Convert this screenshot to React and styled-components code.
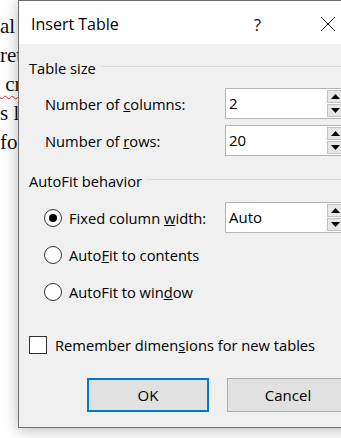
import styled, { createGlobalStyle } from "styled-components";

const GlobalStyle = createGlobalStyle`
  html, body {
    margin: 0;
    padding: 0;
    background: #ffffff;
    overflow: hidden;
  }
`;

const Screen = styled.div`
  display: flex;
  width: 341px;
  height: 438px;
  overflow: hidden;
  background: #ffffff;
`;

const DocStrip = styled.div`
  flex: none;
  width: 18px;
  padding-top: 12px;
  font-family: "Liberation Serif", "Times New Roman", serif;
  font-size: 21px;
  line-height: 29px;
  color: #111;
  white-space: pre;
  overflow: hidden;
`;

const DocLine = styled.div`
  text-decoration: ${(p) => (p.$misspelled ? "underline wavy #e02020" : "none")};
  text-decoration-thickness: 1px;
  text-underline-offset: 4px;
`;

const Dialog = styled.div`
  flex: none;
  width: 340px;
  height: 426px;
  display: flex;
  flex-direction: column;
  border: 1px solid #6f6f6f;
  border-right: none;
  background: #f0f0f0;
  box-shadow: 0 2px 14px rgba(0, 0, 0, 0.28);
  font-family: "Open Sans", "Noto Sans", sans-serif;
  font-size: 14.7px;
  color: #000;
  position: relative;
  z-index: 1;
`;

const TitleBar = styled.div`
  height: 43px;
  flex: none;
  display: flex;
  align-items: center;
  background: #ffffff;
  padding: 3px 0 0 12px;
  box-sizing: border-box;
`;

const Title = styled.div`
  flex: 1;
  font-size: 16px;
`;

const TitleButton = styled.div`
  width: ${(p) => p.$w}px;
  display: flex;
  justify-content: center;
  align-items: center;
  font-size: 17px;
  color: #111;
`;

const Body = styled.div`
  flex: 1;
  display: flex;
  flex-direction: column;
  padding: 14px 14px 0 10px;
`;

const GroupHeader = styled.div`
  display: flex;
  align-items: center;
  height: 20px;
  gap: 5px;
  margin-top: ${(p) => p.$top || 0}px;

  &::after {
    content: "";
    flex: 1;
    height: 1px;
    background: #dcdcdc;
    margin-top: -3px;
  }
`;

const Rows = styled.div`
  display: flex;
  flex-direction: column;
  gap: ${(p) => p.$gap}px;
  margin-top: ${(p) => p.$top}px;
  padding-left: ${(p) => p.$indent}px;
`;

const Row = styled.div`
  display: flex;
  align-items: center;
  height: 31px;
`;

const Label = styled.div`
  width: ${(p) => (p.$w ? `${p.$w}px` : "auto")};
  flex: none;
`;

const Field = styled.div`
  flex: 1;
  height: 31px;
  box-sizing: border-box;
  display: flex;
  border: 1px solid #b4b4b4;
  background: #ffffff;
`;

const FieldText = styled.div`
  flex: 1;
  padding: 4px 0 0 3px;
  font-size: 15px;
`;

const Spinner = styled.div`
  width: 17px;
  display: flex;
  flex-direction: column;
  gap: 1px;
  padding: 1px 0 1px 0;
`;

const SpinButton = styled.div`
  flex: 1;
  display: flex;
  align-items: center;
  justify-content: center;
  background: #e6e6e6;
  border: 1px solid #c2c2c2;
`;

const Radio = styled.div`
  width: 18px;
  height: 18px;
  box-sizing: border-box;
  border: 1px solid #333;
  border-radius: 50%;
  background: #fff;
  display: flex;
  align-items: center;
  justify-content: center;
  margin-right: 7px;
  flex: none;

  &::after {
    content: "";
    display: ${(p) => (p.$checked ? "block" : "none")};
    width: 8px;
    height: 8px;
    border-radius: 50%;
    background: #000;
  }
`;

const CheckRow = styled.div`
  display: flex;
  align-items: center;
  gap: 8px;
  margin-top: 28px;
`;

const Checkbox = styled.div`
  width: 18px;
  height: 18px;
  box-sizing: border-box;
  border: 1px solid #333;
  background: #fff;
`;

const ButtonRow = styled.div`
  display: flex;
  gap: 18px;
  margin-top: 23px;
  padding-left: 58px;
`;

const Button = styled.div`
  flex: none;
  width: 122px;
  height: 34px;
  box-sizing: border-box;
  display: flex;
  align-items: center;
  justify-content: center;
  background: #e1e1e1;
  border: ${(p) => (p.$primary ? "2px solid #0078d7" : "1px solid #adadad")};
  font-size: 15px;
`;

const Tri = ({ up }) => (
  <svg width="9" height="5" viewBox="0 0 9 5">
    <path d={up ? "M0 5 L4.5 0 L9 5 Z" : "M0 0 L4.5 5 L9 0 Z"} fill="#000" />
  </svg>
);

const SpinField = ({ value }) => (
  <Field>
    <FieldText>{value}</FieldText>
    <Spinner>
      <SpinButton>
        <Tri up />
      </SpinButton>
      <SpinButton>
        <Tri />
      </SpinButton>
    </Spinner>
  </Field>
);

export default function App() {
  return (
    <>
      <GlobalStyle />
      <Screen>
        <DocStrip>
          <DocLine>al</DocLine>
          <DocLine>ret</DocLine>
          <DocLine $misspelled> cr</DocLine>
          <DocLine>s l</DocLine>
          <DocLine>for</DocLine>
        </DocStrip>
        <Dialog>
          <TitleBar>
            <Title>Insert Table</Title>
            <TitleButton $w={77}>?</TitleButton>
            <TitleButton $w={63}>
              <svg width="16" height="16" viewBox="0 0 16 16">
                <path d="M1 1 L15 15 M15 1 L1 15" stroke="#111" strokeWidth="1" />
              </svg>
            </TitleButton>
          </TitleBar>
          <Body>
            <GroupHeader>Table size</GroupHeader>
            <Rows $indent={16} $gap={6} $top={10}>
              <Row>
                <Label $w={180}>
                  Number of <u>c</u>olumns:
                </Label>
                <SpinField value="2" />
              </Row>
              <Row>
                <Label $w={180}>
                  Number of <u>r</u>ows:
                </Label>
                <SpinField value="20" />
              </Row>
            </Rows>
            <GroupHeader $top={15}>AutoFit behavior</GroupHeader>
            <Rows $indent={15} $gap={6} $top={11}>
              <Row>
                <Radio $checked />
                <Label $w={156}>
                  Fixed column <u>w</u>idth:
                </Label>
                <SpinField value="Auto" />
              </Row>
              <Row>
                <Radio />
                <Label>
                  Auto<u>F</u>it to contents
                </Label>
              </Row>
              <Row>
                <Radio />
                <Label>
                  AutoFit to win<u>d</u>ow
                </Label>
              </Row>
            </Rows>
            <CheckRow>
              <Checkbox />
              <span>
                Remember dimen<u>s</u>ions for new tables
              </span>
            </CheckRow>
            <ButtonRow>
              <Button $primary>OK</Button>
              <Button>Cancel</Button>
            </ButtonRow>
          </Body>
        </Dialog>
      </Screen>
    </>
  );
}
